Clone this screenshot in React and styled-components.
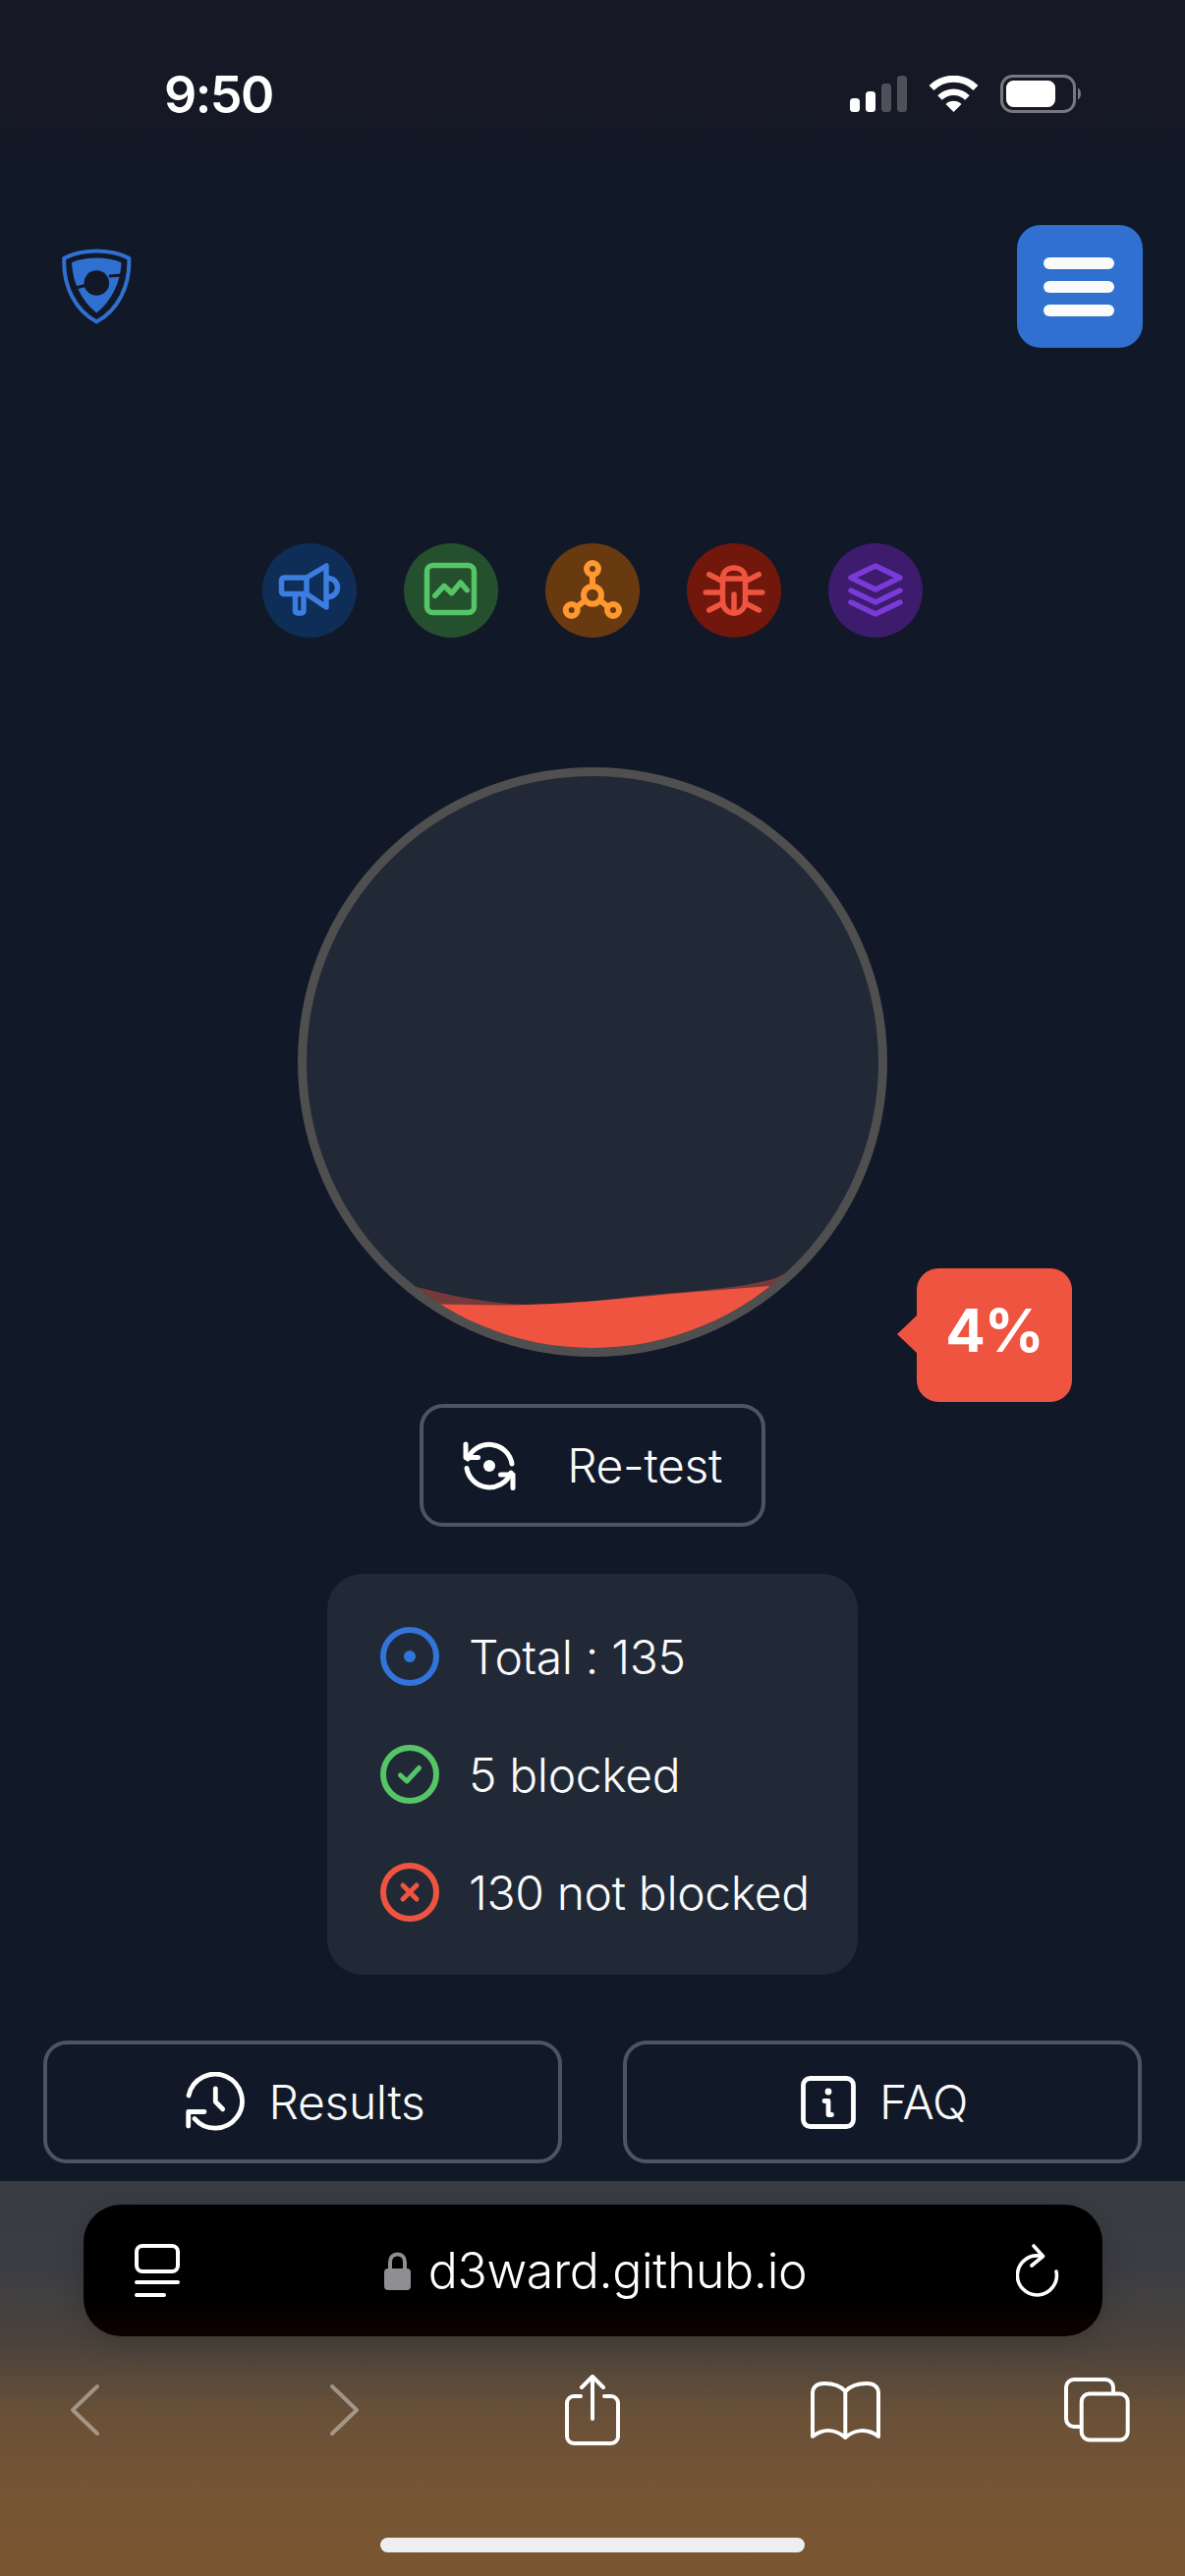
import React from "react";
import styled, { createGlobalStyle } from "styled-components";

const Global = createGlobalStyle`
  html, body { margin: 0; padding: 0; background: #111827; }
  * { box-sizing: border-box; }
  body { font-family: Inter, "Noto Sans", "Liberation Sans", sans-serif; color: #f9fafb; }
`;

const BLUE = "#3274d9";
const GREEN = "#56c568";
const ORANGE = "#ff9830";
const RED = "#ef5440";
const PURPLE = "#7a3ad8";

const Page = styled.div`
  width: 1206px;
  height: 2622px;
  overflow: hidden;
  display: flex;
  flex-direction: column;
  background: #111827;
`;

const StatusBar = styled.div`
  height: 168px;
  padding: 68px 106px 0 167px;
  display: flex;
  justify-content: space-between;
  align-items: flex-start;
  background: linear-gradient(180deg, #171825 0%, #161825 70%, #111827 100%);
`;
const Clock = styled.div`
  font-size: 52px;
  line-height: 58px;
  font-weight: 600;
  color: #fff;
  letter-spacing: -1.5px;
`;
const StatusIcons = styled.div`
  display: flex;
  align-items: center;
  gap: 22px;
  margin-top: 8px;
`;

const Header = styled.header`
  margin-top: 61px;
  padding: 0 43px 0 60px;
  display: flex;
  justify-content: space-between;
  align-items: center;
`;
const MenuButton = styled.div`
  width: 128px;
  height: 125px;
  padding-right: 2px;
  border-radius: 24px;
  background: #3070d0;
  display: flex;
  flex-direction: column;
  align-items: center;
  justify-content: center;
  gap: 12px;
`;
const MenuBar = styled.span`
  width: 72px;
  height: 12px;
  border-radius: 6px;
  background: #fafafa;
`;

const TestRow = styled.div`
  margin-top: 199px;
  display: flex;
  justify-content: center;
  gap: 48px;
`;
const TestIcon = styled.div`
  width: 96px;
  height: 96px;
  border-radius: 50%;
  background: ${(p) => p.$bg};
  color: ${(p) => p.$fg};
  display: flex;
`;

const BallWrap = styled.div`
  position: relative;
  width: 600px;
  height: 600px;
  margin: 132px auto 0;
`;
const Ball = styled.div`
  width: 600px;
  height: 600px;
  border-radius: 50%;
  border: 9px solid #4f4f50;
  background: #222936;
  overflow: hidden;
  display: flex;
`;
const Bubble = styled.div`
  position: absolute;
  left: 630px;
  top: 510px;
  width: 158px;
  height: 136px;
  border-radius: 22px;
  background: ${RED};
  color: #fff;
  font-size: 60px;
  font-weight: 700;
  letter-spacing: -1px;
  display: flex;
  align-items: center;
  justify-content: center;
  padding-bottom: 10px;
  &::before {
    content: "";
    position: absolute;
    left: -20px;
    top: 48px;
    border-right: 20px solid ${RED};
    border-top: 19.5px solid transparent;
    border-bottom: 19.5px solid transparent;
  }
`;

const RetestButton = styled.div`
  width: 352px;
  height: 125px;
  margin: 48px auto 0;
  border: 4px solid #4b5563;
  border-radius: 24px;
  display: flex;
  align-items: center;
  justify-content: center;
  gap: 52px;
  font-size: 48px;
  font-weight: 350;
  letter-spacing: -0.35px;
  color: #f9fafb;
`;

const StatsCard = styled.div`
  width: 540px;
  height: 408px;
  margin: 48px auto 0;
  padding: 54px 0 0 54px;
  border-radius: 36px;
  background: #212936;
  display: flex;
  flex-direction: column;
  gap: 60px;
`;
const StatRow = styled.div`
  height: 60px;
  display: flex;
  align-items: center;
  gap: 30px;
  font-size: 48px;
  font-weight: 350;
  letter-spacing: -0.35px;
  font-feature-settings: "calt" 0;
  white-space: nowrap;
  color: #f9fafb;
`;

const ActionRow = styled.div`
  margin-top: 67px;
  padding: 0 44px;
  display: flex;
  justify-content: space-between;
`;
const ActionButton = styled.div`
  width: 528px;
  height: 125px;
  padding-left: 4px;
  border: 4px solid #4b5563;
  border-radius: 24px;
  display: flex;
  align-items: center;
  justify-content: center;
  gap: 24px;
  font-size: 48px;
  font-weight: 350;
  letter-spacing: -0.35px;
  color: #f9fafb;
`;

const BrowserBar = styled.div`
  margin-top: 18px;
  height: 402px;
  padding-top: 24px;
  display: flex;
  flex-direction: column;
  background: linear-gradient(180deg, #3a3c43 0%, #3c3d43 22%, #4c443c 42%, #6a5137 60%, #755434 78%, #7b5632 100%);
`;
const AddressPill = styled.div`
  width: 1037px;
  height: 134px;
  margin-left: 85px;
  padding: 0 44px 0 52px;
  border-radius: 38px;
  background: linear-gradient(180deg, #000 70%, #0e0200 100%);
  box-shadow: 0 6px 30px rgba(0, 0, 0, 0.18);
  display: flex;
  align-items: center;
  justify-content: space-between;
`;
const Domain = styled.div`
  display: flex;
  align-items: center;
  gap: 18px;
  padding-right: 5px;
  font-size: 50px;
  font-weight: 350;
  color: #fff;
  letter-spacing: -0.35px;
`;
const ToolRow = styled.div`
  margin-top: 39px;
  height: 72px;
  display: grid;
  grid-template-columns: 173px 355px 150px 364px 148px;
  justify-items: center;
  align-items: center;
`;
const HomeBar = styled.div`
  width: 432px;
  height: 15px;
  margin: 94px auto 0;
  border-radius: 8px;
  background: #eeeef0;
`;

const Stroke = styled.svg`
  display: block;
  flex: none;
  fill: none;
  stroke: ${(p) => p.$c || "currentColor"};
  stroke-width: ${(p) => p.$w || 5};
  stroke-linecap: round;
  stroke-linejoin: round;
`;

const Logo = () => (
  <svg width="78" height="82" viewBox="20 20 78 82" style={{ display: "block" }}>
    <path d="M58.3 24.5C70 24.5 82 27 91.3 31.7C92.5 60 80 85 58.3 96.5C36.5 85 24 60 25.3 31.7C34.5 27 46.5 24.5 58.3 24.5Z" fill="none" stroke="#3070d0" strokeWidth="4" strokeLinejoin="round" />
    <path d="M58.3 31.5C68 31.5 76 33 83.5 36.2C83 55 74 75 58.3 87.5C42.5 75 33.5 55 33 36.2C40 33 49 31.5 58.3 31.5Z" fill="#3070d0" />
    <circle cx="58.3" cy="57" r="12.8" fill="#111827" />
    <path d="M71 50L85 49M33 63L47 59.5" stroke="#111827" strokeWidth="3" />
  </svg>
);

const Signal = () => (
  <svg width="58" height="37" viewBox="0 0 58 37" style={{ display: "block" }}>
    <rect x="0" y="23" width="10" height="14" rx="3.5" fill="#fff" />
    <rect x="16" y="16" width="10" height="21" rx="3.5" fill="#fff" />
    <rect x="32" y="8" width="10" height="29" rx="3.5" fill="#4f505a" />
    <rect x="48" y="0" width="10" height="37" rx="3.5" fill="#4f505a" />
  </svg>
);
const Wifi = () => (
  <svg width="51" height="37" viewBox="0 0 51 37" style={{ display: "block" }}>
    <path d="M3 12.5A32 32 0 0 1 48 12.5" fill="none" stroke="#fff" strokeWidth="7" />
    <path d="M11.5 22.5A20 20 0 0 1 39.5 22.5" fill="none" stroke="#fff" strokeWidth="6.5" />
    <path d="M17.5 29A11.5 11.5 0 0 1 33.5 29L25.5 37Z" fill="#fff" />
  </svg>
);
const Battery = () => (
  <svg width="82" height="39" viewBox="0 0 82 39" style={{ display: "block" }}>
    <rect x="1.5" y="1.5" width="74" height="36" rx="11" fill="none" stroke="#77777f" strokeWidth="3" />
    <rect x="6" y="6" width="50" height="27" rx="7.5" fill="#fff" />
    <path d="M79 13.5C81 14.5 82 17 82 19.5C82 22 81 24.5 79 25.5Z" fill="#77777f" />
  </svg>
);

const Megaphone = () => (
  <Stroke width="96" height="96" viewBox="0 0 96 96" $w={5.5}>
    <path d="M45 35H22a2.5 2.5 0 0 0-2.5 2.5V49a2.5 2.5 0 0 0 2.5 2.5H45Z" />
    <path d="M45 35L65 23V65L45 51.5" />
    <path d="M33.5 52V69a2 2 0 0 0 2 2H40a2 2 0 0 0 2-2V52" />
    <path d="M67 35.5a9.5 9.5 0 0 1 0 19" />
  </Stroke>
);
const ChartBox = () => (
  <Stroke width="96" height="96" viewBox="0 0 96 96" $w={5.5}>
    <rect x="23.5" y="22.5" width="48" height="48" rx="6" />
    <path d="M31.7 53.3L41 43.3L48.7 50.7L57.7 40L64.3 47.7" />
  </Stroke>
);
const Network = () => (
  <Stroke width="96" height="96" viewBox="0 0 96 96" $w={6}>
    <circle cx="48" cy="52.7" r="9" />
    <circle cx="48" cy="26" r="6" />
    <circle cx="26.7" cy="68" r="6" />
    <circle cx="69" cy="68" r="6" />
    <path d="M48 32V43.5M33 64L40 58.5M63 64L56 58.5" />
  </Stroke>
);
const Bug = () => (
  <Stroke width="96" height="96" viewBox="0 0 96 96" $w={5.5}>
    <path d="M36.5 36C36.5 29 41.5 25 48 25S59.5 29 59.5 36V59C59.5 66 54.5 71 48 71S36.5 66 36.5 59Z" />
    <path d="M36.5 36H59.5M48 52V71" />
    <path d="M22.7 31.7L36 38.5M73.3 31.7L60 38.5M19.3 50H35M76.7 50H61M22.7 68L35 61.7M73.3 68L61 61.7" />
  </Stroke>
);
const Layers = () => (
  <Stroke width="96" height="96" viewBox="0 0 96 96" $w={5.5}>
    <path d="M48 23L73 35L48 47L23 35Z" />
    <path d="M23 48L48 60L73 48" />
    <path d="M23 60L48 72L73 60" />
  </Stroke>
);

const Wave = () => (
  <svg width="582" height="582" viewBox="0 0 582 582" style={{ display: "block", flex: "none" }}>
    <path d="M60 505C115 522 155 532 205 537C260 541 320 530 371 526C420 522 470 517 485 507C520 495 560 480 582 470V582H0V505Z" fill="#ef5440" opacity="0.42" />
    <path d="M100 537L203 538.5C260 538 320 532 371 527L471 519L582 519V582H0V537Z" fill="#ef5440" />
  </svg>
);

const Retest = () => (
  <Stroke width="54" height="54" viewBox="0 0 54 54" $c="#fff">
    <path d="M5 20A23.5 23.5 0 0 1 50 25" />
    <path d="M3 5V18.5H15.5" />
    <path d="M4 29.5A23.5 23.5 0 0 0 49 34" />
    <path d="M51 49.5V36H38.5" />
    <circle cx="27" cy="27" r="6" fill="#fff" stroke="none" />
  </Stroke>
);

const StatCircle = ({ c, children }) => (
  <Stroke width="60" height="60" viewBox="0 0 60 60" $c={c} $w={5}>
    <circle cx="30" cy="30" r="27" strokeWidth="6" />
    {children}
  </Stroke>
);

const History = () => (
  <Stroke width="62" height="62" viewBox="18 13 62 62" $c="#fff" $w={4.8}>
    <path d="M22 37A27.5 27.5 0 1 1 28 60.5" />
    <path d="M21.7 68V53.5H38" />
    <path d="M49.3 30V43.3L56.7 50.7" />
  </Stroke>
);
const InfoSquare = () => (
  <Stroke width="56" height="54" viewBox="0 0 56 54" $c="#fff" $w={4.8}>
    <rect x="2.5" y="2.5" width="51" height="49" rx="7" />
    <circle cx="28" cy="16" r="3.4" fill="#fff" stroke="none" />
    <path d="M24 25.5H28V39.5H31.5" />
  </Stroke>
);

const SidebarIcon = () => (
  <Stroke width="46" height="54" viewBox="0 0 46 54" $c="#fff" $w={4}>
    <rect x="2" y="2" width="42" height="26" rx="6" />
    <path d="M2 39H44M2 52H30" />
  </Stroke>
);
const Lock = () => (
  <svg width="27" height="39" viewBox="0 0 27 39" style={{ display: "block" }}>
    <path d="M6 19V10.5C6 5.5 9 2.5 13.5 2.5S21 5.5 21 10.5V19" fill="none" stroke="#8e8e93" strokeWidth="4" />
    <rect x="0" y="17" width="27" height="22" rx="4" fill="#8e8e93" />
  </svg>
);
const Reload = () => (
  <Stroke width="44" height="56" viewBox="0 0 44 56" $c="#fff" $w={3.6}>
    <path d="M26 13.5A20 20 0 1 0 41 29" />
    <path d="M18 3L27.5 13.5L16 23" />
  </Stroke>
);
const Chevron = ({ flip }) => (
  <Stroke width="31" height="54" viewBox="0 0 31 54" $c="rgba(255,255,255,0.4)" $w={4}>
    <path d={flip ? "M3 3L28 27L3 51" : "M28 3L3 27L28 51"} />
  </Stroke>
);
const Share = () => (
  <Stroke width="56" height="72" viewBox="0 0 56 72" $c="#fff" $w={4}>
    <path d="M16 22H9a7 7 0 0 0-7 7V63a7 7 0 0 0 7 7H47a7 7 0 0 0 7-7V29a7 7 0 0 0-7-7H40" />
    <path d="M28 3V45M17 13L28 2L39 13" />
  </Stroke>
);
const Book = () => (
  <Stroke width="75" height="63" viewBox="22 22 75 63" $c="#fff" $w={4}>
    <path d="M59.3 34C54 28 46 26 38 26C30 26 26 30 26 36V80C38 71 50 73 59.3 81C68.5 73 81 71 93 80V36C93 30 89 26 81 26C73 26 65 28 59.3 34Z" />
    <path d="M59.3 34V81" />
  </Stroke>
);
const Tabs = () => (
  <Stroke width="69" height="67" viewBox="281 21 69 67" $c="#fff" $w={4}>
    <path d="M332 36V31a8 8 0 0 0-8-8H292a8 8 0 0 0-8 8V63a8 8 0 0 0 8 8H298" />
    <rect x="299.7" y="37.5" width="47" height="47" rx="8" />
  </Stroke>
);

export default function App() {
  return (
    <Page>
      <Global />
      <StatusBar>
        <Clock>9:50</Clock>
        <StatusIcons>
          <Signal />
          <Wifi />
          <Battery />
        </StatusIcons>
      </StatusBar>

      <Header>
        <Logo />
        <MenuButton>
          <MenuBar />
          <MenuBar />
          <MenuBar />
        </MenuButton>
      </Header>

      <TestRow>
        <TestIcon $bg="#0f2e57" $fg="#3b7de0"><Megaphone /></TestIcon>
        <TestIcon $bg="#25502d" $fg={GREEN}><ChartBox /></TestIcon>
        <TestIcon $bg="#693a10" $fg={ORANGE}><Network /></TestIcon>
        <TestIcon $bg="#72170c" $fg={RED}><Bug /></TestIcon>
        <TestIcon $bg="#3d1c6e" $fg={PURPLE}><Layers /></TestIcon>
      </TestRow>

      <BallWrap>
        <Ball><Wave /></Ball>
        <Bubble>4%</Bubble>
      </BallWrap>

      <RetestButton>
        <Retest />
        <span>Re-test</span>
      </RetestButton>

      <StatsCard>
        <StatRow>
          <StatCircle c={BLUE}><circle cx="30" cy="30" r="6" fill={BLUE} stroke="none" /></StatCircle>
          <span>Total : 135</span>
        </StatRow>
        <StatRow>
          <StatCircle c={GREEN}><path d="M20.5 31L27 37L39.5 23.5" /></StatCircle>
          <span>5 blocked</span>
        </StatRow>
        <StatRow>
          <StatCircle c={RED}><path d="M23 23L37 37M37 23L23 37" /></StatCircle>
          <span>130 not blocked</span>
        </StatRow>
      </StatsCard>

      <ActionRow>
        <ActionButton>
          <History />
          <span>Results</span>
        </ActionButton>
        <ActionButton>
          <InfoSquare />
          <span>FAQ</span>
        </ActionButton>
      </ActionRow>

      <BrowserBar>
        <AddressPill>
          <SidebarIcon />
          <Domain>
            <Lock />
            <span>d3ward.github.io</span>
          </Domain>
          <Reload />
        </AddressPill>
        <ToolRow>
          <Chevron />
          <Chevron flip />
          <Share />
          <Book />
          <Tabs />
        </ToolRow>
        <HomeBar />
      </BrowserBar>
    </Page>
  );
}
